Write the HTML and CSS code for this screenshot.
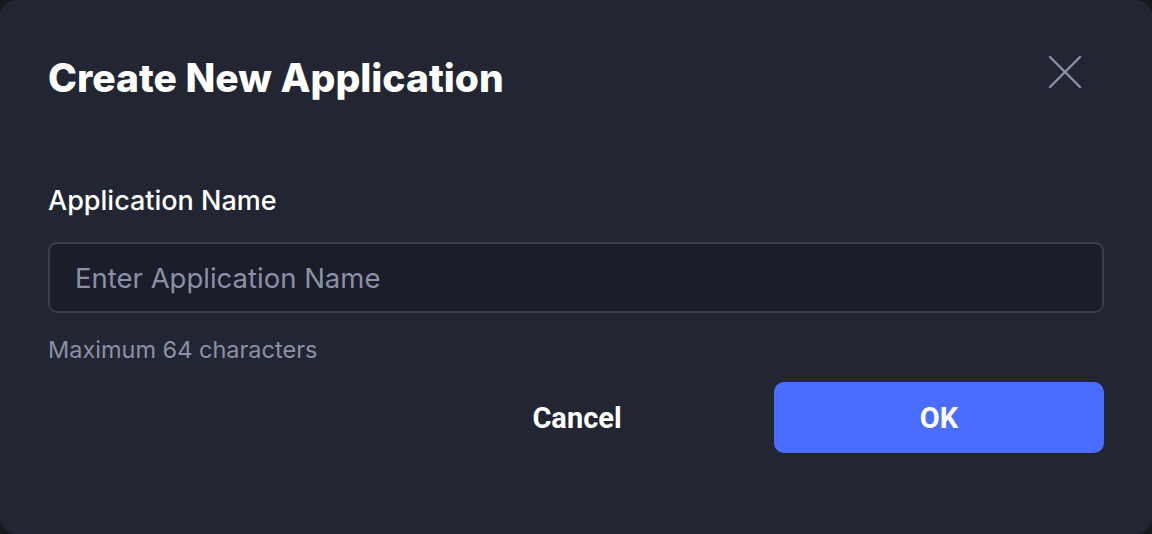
FILE: index.html
```html
<!DOCTYPE html>
<html>
<head>
<meta charset="utf-8">
<link rel="stylesheet" href="styles.css">
</head>
<body>
<div class="dialog">
  <div class="header">
    <h1 class="title">Create New Application</h1>
    <button class="close" aria-label="Close">
      <svg width="34" height="34" viewBox="0 0 34 34"><path d="M2 2L32 32M32 2L2 32" stroke="#8a90a8" stroke-width="2.4" stroke-linecap="round" fill="none"/></svg>
    </button>
  </div>
  <div class="field">
    <label class="label">Application Name</label>
    <input class="input" type="text" placeholder="Enter Application Name">
    <div class="hint">Maximum 64 characters</div>
  </div>
  <div class="actions">
    <button class="btn cancel">Cancel</button>
    <button class="btn ok">OK</button>
  </div>
</div>
</body>
</html>
```
FILE: styles.css
```css
html, body {
  margin: 0;
  padding: 0;
  background: #17191f;
}
.dialog {
  width: 1152px;
  height: 534px;
  box-sizing: border-box;
  background: #222632;
  border-radius: 16px;
  padding: 0 48px 0 48px;
  display: flex;
  flex-direction: column;
  font-family: Inter, "Noto Sans", sans-serif;
}
.header {
  display: flex;
  justify-content: space-between;
  align-items: center;
  padding-top: 54px;
  height: 48px;
}
.title {
  margin: 0;
  color: #ffffff;
  font-size: 39px;
  font-weight: 800;
  line-height: 48px;
  letter-spacing: 0;
}
.close {
  background: none;
  border: none;
  padding: 0;
  margin-right: 22px;
  margin-top: -12px;
  width: 34px;
  height: 34px;
  display: flex;
}
.field {
  display: flex;
  flex-direction: column;
  margin-top: 84px;
}
.label {
  color: #ffffff;
  font-size: 27px;
  font-weight: 500;
  line-height: 30px;
}
.input {
  margin-top: 26px;
  height: 71px;
  box-sizing: border-box;
  border: 2px solid #3b3e4a;
  border-radius: 9px;
  background: #1b1d28;
  padding: 0 25px;
  font-family: Inter, "Noto Sans", sans-serif;
  font-size: 27.5px;
  color: #ffffff;
  outline: none;
}
.input::placeholder {
  color: #8a90a8;
}
.hint {
  margin-top: 24px;
  color: #8a90a8;
  font-size: 23.5px;
  line-height: 26px;
}
.actions {
  display: flex;
  justify-content: flex-end;
  gap: 32px;
  margin-top: 19px;
}
.btn {
  width: 330px;
  height: 71px;
  border: none;
  border-radius: 10px;
  font-family: Roboto, "Liberation Sans", sans-serif;
  font-weight: 700;
  font-size: 29px;
  color: #ffffff;
}
.cancel {
  background: transparent;
}
.ok {
  background: #4a6cff;
}
```
